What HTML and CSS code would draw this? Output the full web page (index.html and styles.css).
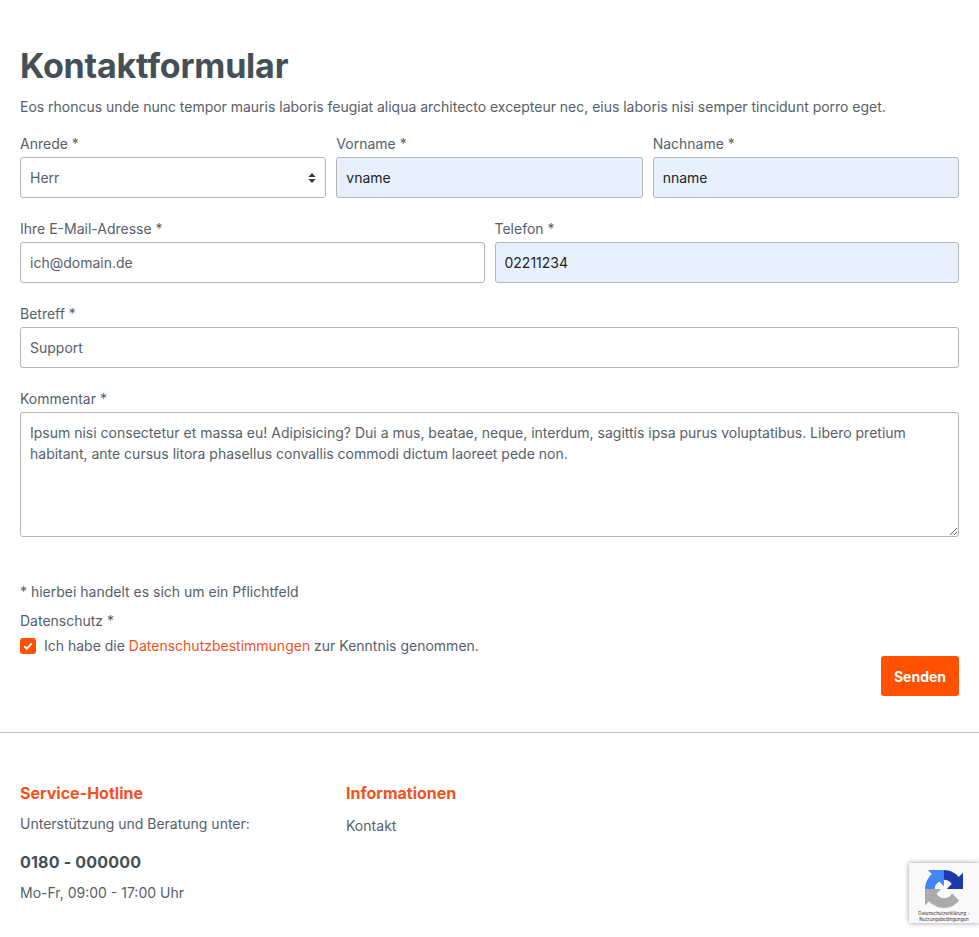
FILE: index.html
```html
<!DOCTYPE html>
<html lang="de">

<head>
    <meta charset="UTF-8">
    <title>Kontaktformular</title>
    <link rel="stylesheet" href="styles.css">
</head>

<body>

    <main class="content">
        <h1>Kontaktformular</h1>
        <p class="intro">Eos rhoncus unde nunc tempor mauris laboris feugiat aliqua architecto excepteur nec, eius laboris nisi semper tincidunt porro eget.</p>

        <form onsubmit="event.preventDefault()">
            <div class="form-row row-three">
                <div class="form-group">
                    <label>Anrede *</label>
                    <div class="select-wrap">
                        <select name="anrede">
                            <option>Herr</option>
                            <option>Frau</option>
                        </select>
                        <svg class="select-arrows" viewBox="0 0 8 12" width="8" height="12"><path d="M4 1 7.700 5H.3zM4 11 .3 7h7.400z" fill="#343a40"/></svg>
                    </div>
                </div>
                <div class="form-group">
                    <label>Vorname *</label>
                    <input class="filled" type="text" name="vorname" value="vname">
                </div>
                <div class="form-group">
                    <label>Nachname *</label>
                    <input class="filled" type="text" name="nachname" value="nname">
                </div>
            </div>

            <div class="form-row row-two">
                <div class="form-group">
                    <label>Ihre E-Mail-Adresse *</label>
                    <input type="email" name="email" value="ich@domain.de">
                </div>
                <div class="form-group">
                    <label>Telefon *</label>
                    <input class="filled" type="text" name="telefon" value="02211234">
                </div>
            </div>

            <div class="form-group">
                <label>Betreff *</label>
                <input type="text" name="betreff" value="Support">
            </div>

            <div class="form-group">
                <label>Kommentar *</label>
                <textarea name="kommentar">Ipsum nisi consectetur et massa eu! Adipisicing? Dui a mus, beatae, neque, interdum, sagittis ipsa purus voluptatibus. Libero pretium habitant, ante cursus litora phasellus convallis commodi dictum laoreet pede non.</textarea>
            </div>

            <p class="hint">* hierbei handelt es sich um ein Pflichtfeld</p>

            <div class="privacy-label">Datenschutz *</div>
            <label class="check">
                <span class="check-box">
                    <svg viewBox="0 0 10 8" width="10" height="8"><path d="M1.200 4.200 3.800 6.600 8.800 1.400" fill="none" stroke="#fff" stroke-width="2"/></svg>
                </span>
                <span>Ich habe die <a href="#">Datenschutzbestimmungen</a> zur Kenntnis genommen.</span>
            </label>

            <div class="actions">
                <button type="submit">Senden</button>
            </div>
        </form>
    </main>

    <footer class="footer">
        <div class="footer-col hotline">
            <h3>Service-Hotline</h3>
            <p class="support">Unterstützung und Beratung unter:</p>
            <p class="phone">0180 - 000000</p>
            <p class="hours">Mo-Fr, 09:00 - 17:00 Uhr</p>
        </div>
        <div class="footer-col">
            <h3>Informationen</h3>
            <a class="footer-link" href="#">Kontakt</a>
        </div>
    </footer>

    <div class="recaptcha">
        <svg viewBox="0 0 64 64" width="38" height="38">
            <defs>
                <path id="rc-arc" d="M64 31.955l-.033-1.37V4.687l-7.16 7.16C50.948 4.674 42.033.093 32.05.093c-10.4 0-19.622 4.96-25.458 12.64l11.736 11.86a15.55 15.55 0 0 1 4.754-5.334c2.05-1.6 4.952-2.906 8.968-2.906.485 0 .86.057 1.135.163 4.976.393 9.288 3.14 11.827 7.124l-8.307 8.307c10.522-.04 22.4-.066 27.295.005"/>
            </defs>
            <use href="#rc-arc" fill="#1c3aa9"/>
            <use href="#rc-arc" fill="#4285f4" transform="rotate(-90 32 32)"/>
            <use href="#rc-arc" fill="#ababab" transform="rotate(180 32 32)"/>
        </svg>
        <div class="recaptcha-text">Datenschutzerklärung - Nutzungsbedingungen</div>
    </div>

</body>

</html>
```

FILE: styles.css
```css
* {
    box-sizing: border-box;
}

html,
body {
    height: 937px;
    overflow: hidden;
}

body {
    margin: 0;
    background: white;
    color: #56606a;
    font-family: Inter, 'Liberation Sans', sans-serif;
    font-size: 14px;
    line-height: 21px;
}

.content {
    padding: 45px 20px 0;
}

h1 {
    margin: 0 0 9px;
    font-size: 34px;
    line-height: 42px;
    font-weight: 700;
    color: #444f58;
    letter-spacing: -0.2px;
}

.intro {
    margin: 0 0 16px;
    letter-spacing: -0.015px;
}

.form-row {
    display: grid;
    column-gap: 10px;
}

.row-three {
    grid-template-columns: repeat(3, 1fr);
}

.row-two {
    grid-template-columns: repeat(2, 1fr);
}

.form-group {
    margin-bottom: 20px;
}

.form-group label,
.privacy-label {
    display: block;
    margin-bottom: 3px;
}

input,
select,
textarea {
    display: block;
    width: 100%;
    padding: 9px;
    border: 1px solid #b5b5b5;
    border-radius: 3px;
    background: white;
    color: #56606a;
    font-family: inherit;
    font-size: 14px;
    line-height: 21px;
    outline: none;
}

input,
select {
    height: 41px;
}

select {
    appearance: none;
}

.select-wrap {
    position: relative;
}

.select-arrows {
    position: absolute;
    right: 10px;
    top: 15px;
}

input.filled {
    background: #e8f0fe;
    color: #212529;
}

textarea {
    height: 125px;
    resize: vertical;
}

.hint {
    margin: 44px 0 8px;
}

.privacy-label {
    margin-bottom: 4px;
}

.check {
    display: flex;
    align-items: center;
    gap: 8px;
}

.check-box {
    display: flex;
    align-items: center;
    justify-content: center;
    width: 16px;
    height: 16px;
    border-radius: 3px;
    background: #ff5100;
}

a {
    color: #f4511e;
    text-decoration: none;
}

.actions {
    display: flex;
    justify-content: flex-end;
}

button {
    width: 78px;
    height: 40px;
    border: none;
    border-radius: 3px;
    background: #ff5100;
    color: white;
    font-family: inherit;
    font-size: 14px;
    font-weight: 700;
    cursor: pointer;
}

.footer {
    display: flex;
    margin-top: 36px;
    padding: 49px 20px 0;
    border-top: 1px solid #bfbfbf;
}

.hotline {
    width: 326px;
}

.footer h3 {
    margin: 0 0 9px;
    color: #f4511e;
    font-size: 16px;
    line-height: 22px;
    font-weight: 700;
}

.footer p {
    margin: 0;
}

.footer .support {
    margin-bottom: 16px;
}

.footer .phone {
    margin-bottom: 8px;
    color: #444f58;
    font-size: 16px;
    line-height: 24px;
    font-weight: 700;
    letter-spacing: 0.2px;
}

.footer-link {
    display: block;
    margin-top: 11px;
    color: #56606a;
    letter-spacing: 0.02px;
}

.recaptcha {
    position: absolute;
    left: 909px;
    top: 863px;
    width: 70px;
    height: 60px;
    padding-top: 7px;
    background: #f9f9f9;
    box-shadow: 0 0 5px rgba(0, 0, 0, 0.4);
    text-align: center;
}

.recaptcha svg {
    display: block;
    margin-left: 16px;
}

.recaptcha-text {
    margin-top: 3px;
    font-size: 4.6px;
    line-height: 6px;
    color: #333;
}
```
